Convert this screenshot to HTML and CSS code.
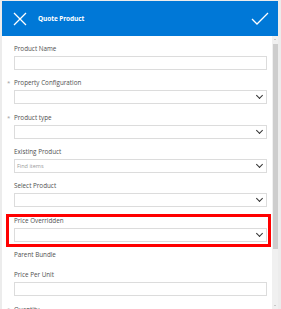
FILE: index.html
```html
<!DOCTYPE html>
<html lang="en">
<head>
    <meta charset="UTF-8">
    <meta name="viewport" content="width=device-width, initial-scale=1.0">
    <title>Quote Product</title>
    <link rel="stylesheet" href="styles.css">
</head>
<body>

    <div class="dialog">
        <div class="dialog-header">
            <svg class="icon-close" width="14" height="14" viewBox="0 0 14 14">
                <path d="M1 1 L13 13 M13 1 L1 13" stroke="#fff" stroke-width="1.3" fill="none"/>
            </svg>
            <span class="dialog-title">Quote Product</span>
            <svg class="icon-ok" width="18" height="13" viewBox="0 0 18 13">
                <path d="M1 7 L6 12 L17 1" stroke="#fff" stroke-width="1.3" fill="none"/>
            </svg>
        </div>

        <div class="dialog-body">
            <div class="form">
                <div class="field">
                    <label>Product Name</label>
                    <div class="input"></div>
                </div>
                <div class="field required">
                    <label>Property Configuration</label>
                    <div class="input select"><span class="chevron"></span></div>
                </div>
                <div class="field required">
                    <label>Product type</label>
                    <div class="input select"><span class="chevron"></span></div>
                </div>
                <div class="field">
                    <label>Existing Product</label>
                    <div class="input select"><span class="placeholder">Find items</span><span class="chevron"></span></div>
                </div>
                <div class="field">
                    <label>Select Product</label>
                    <div class="input select"><span class="chevron"></span></div>
                </div>
                <div class="field highlighted">
                    <label>Price Overridden</label>
                    <div class="input select"><span class="chevron"></span></div>
                </div>
                <div class="field no-input">
                    <label>Parent Bundle</label>
                </div>
                <div class="field">
                    <label>Price Per Unit</label>
                    <div class="input"></div>
                </div>
                <div class="field required">
                    <label>Quantity</label>
                    <div class="input"></div>
                </div>
            </div>

            <div class="scrollbar">
                <span class="arrow-up"></span>
                <div class="thumb"></div>
                <span class="arrow-down"></span>
            </div>
        </div>
    </div>

</body>
</html>
```

FILE: styles.css
```css
:root {
    --blue: #0078d7;
    --label: #505050;
    --border: #dcdcdc;
}

body {
    margin: 0;
    background: #ececec;
    font-family: 'Open Sans', 'Noto Sans', sans-serif;
    height: 309px;
    overflow: hidden;
}

.dialog {
    margin: 1px 3px 0 2px;
    background: white;
    height: 308px;
    display: flex;
    flex-direction: column;
}

.dialog-header {
    background: var(--blue);
    height: 35px;
    display: flex;
    align-items: center;
    padding: 0 9px 0 11px;
    flex-shrink: 0;
}

.icon-close {
    display: block;
}

.dialog-title {
    color: white;
    font-size: 6.5px;
    font-weight: 700;
    margin-left: 11px;
    flex: 1;
    letter-spacing: -0.1px;
}

.icon-ok {
    display: block;
    margin-bottom: 1px;
}

.dialog-body {
    flex: 1;
    display: flex;
    overflow: hidden;
}

.form {
    flex: 1;
    padding: 7px 5px 0 12px;
    overflow: hidden;
}

.field {
    position: relative;
    margin-bottom: 7.35px;
}

.field label {
    display: block;
    font-size: 6.3px;
    line-height: 12px;
    color: var(--label);
    margin-bottom: 1px;
}

.field.required::before {
    content: '*';
    position: absolute;
    left: -7px;
    top: 0;
    font-size: 6px;
    line-height: 12px;
    color: #9a9a9a;
}

.field.no-input {
    margin-bottom: 8.35px;
}

.field.highlighted::after {
    content: '';
    position: absolute;
    top: -1px;
    left: -8px;
    right: -4px;
    bottom: -5px;
    border: 3px solid #ff0000;
    pointer-events: none;
}

.input {
    height: 12px;
    border: 1px solid var(--border);
    display: flex;
    align-items: center;
    padding: 0 3px 0 2px;
}

.placeholder {
    flex: 1;
    font-size: 5.5px;
    color: #9a9a9a;
}

.chevron {
    margin-left: auto;
    width: 4px;
    height: 4px;
    border-right: 1.2px solid #333;
    border-bottom: 1.2px solid #333;
    transform: rotate(45deg);
    margin-top: -3px;
    margin-right: 1px;
}

.scrollbar {
    width: 6px;
    background: #f0f0f0;
    display: flex;
    flex-direction: column;
    align-items: center;
    padding-top: 3px;
}

.arrow-up,
.arrow-down {
    width: 0;
    height: 0;
    border-left: 1px solid transparent;
    border-right: 1px solid transparent;
}

.arrow-up {
    border-bottom: 1px solid #a0a0a0;
}

.arrow-down {
    border-top: 1px solid #a0a0a0;
    margin-top: auto;
    margin-bottom: 3px;
}

.thumb {
    width: 5px;
    height: 205px;
    background: #cdcdcd;
    margin-top: 4px;
}
```
